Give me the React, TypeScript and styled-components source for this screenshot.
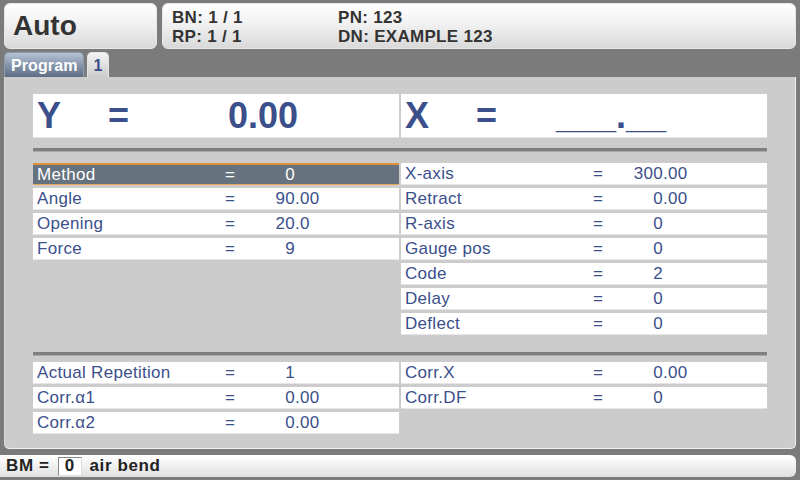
import React from "react";
import styled, { createGlobalStyle } from "styled-components";

const Global = createGlobalStyle`
  html, body { margin: 0; padding: 0; background: #7b7b7b; }
  body { font-family: "Liberation Sans", Arial, sans-serif; }
  * { box-sizing: border-box; }
`;

const Screen = styled.div`
  width: 800px;
  height: 480px;
  background: #7b7b7b;
  padding: 3px 4px 0 4px;
  display: flex;
  flex-direction: column;
  overflow: hidden;
`;

const Header = styled.div`
  display: flex;
  gap: 5px;
  height: 46px;
`;

const HeaderBox = styled.div<{ $w?: number }>`
  ${(p) => (p.$w ? `width: ${p.$w}px; flex: none;` : "flex: 1;")}
  border-radius: 6px;
  background: linear-gradient(#ffffff 0%, #f1f1f1 45%, #d9d9d9 100%);
  border: 1px solid #e8e8e8;
  color: #333;
  font-weight: bold;
`;

const ModeBox = styled(HeaderBox)`
  display: flex;
  align-items: center;
  padding-left: 8px;
  font-size: 28px;
  padding-bottom: 1px;
`;

const InfoBox = styled(HeaderBox)`
  display: grid;
  grid-template-columns: 166px 1fr;
  grid-auto-rows: 19px;
  padding: 4px 0 0 9px;
  font-size: 17px;
  line-height: 19px;
  letter-spacing: 0.3px;
`;

const Tabs = styled.div`
  display: flex;
  gap: 3px;
  height: 25px;
  margin-top: 3px;
  align-items: flex-end;
`;

const Tab = styled.div<{ $active?: boolean }>`
  height: 25px;
  padding: 0 5px 0 6px;
  border-radius: 5px 5px 0 0;
  font-size: 16px;
  font-weight: bold;
  line-height: 26px;
  letter-spacing: 0.1px;
  color: ${(p) => (p.$active ? "#ffffff" : "#3b4f8b")};
  background: ${(p) =>
    p.$active
      ? "linear-gradient(#b4c2d4 0%, #8696ad 50%, #5e6d83 100%)"
      : "linear-gradient(#f4f4f4 0%, #dcdcdc 60%, #cccccc 100%)"};
  border: 1px solid ${(p) => (p.$active ? "#8c9ab0" : "#e6e6e6")};
  border-bottom: none;
`;

const Panel = styled.div`
  height: 372px;
  background: #cccccc;
  border-right: 1px solid #f0f0f0;
  border-bottom: 1px solid #f0f0f0;
  border-left: 1px solid #d8d8d8;
  border-radius: 0 0 5px 5px;
  padding: 17px 28px 0 28px;
  display: flex;
  flex-direction: column;
`;

const Pair = styled.div`
  display: grid;
  grid-template-columns: 366px 366px;
  column-gap: 2px;
  align-items: start;
`;

const Display = styled.div`
  height: 44px;
  background: #ffffff;
  border-bottom: 1px solid #e4e4e4;
  display: grid;
  grid-template-columns: 71px 60px 130px;
  align-items: center;
  padding-left: 4px;
  color: #3b4f8b;
  font-size: 36px;
  font-weight: bold;
  line-height: 44px;
`;

const DisplayValue = styled.span`
  text-align: right;
`;

const Separator = styled.div<{ $top: number; $bottom: number }>`
  margin: ${(p) => p.$top}px 0 ${(p) => p.$bottom}px 0;
  height: 4px;
  width: 734px;
  background: #7f7f7f;
  border-bottom: 1px solid #a9a9a9;
`;

const Column = styled.div`
  display: flex;
  flex-direction: column;
  gap: 3px;
`;

const Row = styled.div<{ $selected?: boolean }>`
  height: 22px;
  display: grid;
  grid-template-columns: 188px 30px 40px 1fr;
  align-items: center;
  padding-left: 4px;
  font-size: 17px;
  letter-spacing: 0.3px;
  line-height: 20px;
  color: ${(p) => (p.$selected ? "#ffffff" : "#3b4f8b")};
  background: ${(p) => (p.$selected ? "#66727e" : "#ffffff")};
  border-top: ${(p) => (p.$selected ? "2px solid #e3923c" : "1px solid #ffffff")};
  border-bottom: 1px solid ${(p) => (p.$selected ? "#eba458" : "#e6e6e6")};
`;

const Eq = styled.span``;

const IntPart = styled.span`
  text-align: right;
`;

const FracPart = styled.span``;

const StatusBar = styled.div`
  margin: 6px 0 0 -4px;
  width: 796px;
  height: 22px;
  border-radius: 0 6px 6px 0;
  background: linear-gradient(#ffffff 0%, #f0f0f0 50%, #e0e0e0 100%);
  display: flex;
  align-items: center;
  padding-left: 6px;
  gap: 8px;
  font-size: 17px;
  font-weight: bold;
  letter-spacing: 0.6px;
  color: #222;
`;

const BMBox = styled.span`
  width: 24px;
  height: 19px;
  background: #fff;
  border: 1px solid #888;
  border-right-color: #ddd;
  border-bottom-color: #ddd;
  display: inline-flex;
  align-items: center;
  justify-content: center;
  line-height: 18px;
  letter-spacing: 0;
`;

type Param = { label: string; value: string; selected?: boolean };

const splitValue = (v: string) => {
  const i = v.indexOf(".");
  return i < 0 ? [v, ""] : [v.slice(0, i), v.slice(i)];
};

const ParamRow = ({ label, value, selected }: Param) => {
  const [int, frac] = splitValue(value);
  return (
    <Row $selected={selected}>
      <span>{label}</span>
      <Eq>=</Eq>
      <IntPart>{int}</IntPart>
      <FracPart>{frac}</FracPart>
    </Row>
  );
};

const leftParams: Param[] = [
  { label: "Method", value: "0", selected: true },
  { label: "Angle", value: "90.00" },
  { label: "Opening", value: "20.0" },
  { label: "Force", value: "9" },
];

const rightParams: Param[] = [
  { label: "X-axis", value: "300.00" },
  { label: "Retract", value: "0.00" },
  { label: "R-axis", value: "0" },
  { label: "Gauge pos", value: "0" },
  { label: "Code", value: "2" },
  { label: "Delay", value: "0" },
  { label: "Deflect", value: "0" },
];

const leftCorr: Param[] = [
  { label: "Actual Repetition", value: "1" },
  { label: "Corr.α1", value: "0.00" },
  { label: "Corr.α2", value: "0.00" },
];

const rightCorr: Param[] = [
  { label: "Corr.X", value: "0.00" },
  { label: "Corr.DF", value: "0" },
];

export default function App() {
  return (
    <>
      <Global />
      <Screen>
        <Header>
          <ModeBox $w={153}>Auto</ModeBox>
          <InfoBox>
            <span>BN: 1 / 1</span>
            <span>PN: 123</span>
            <span>RP: 1 / 1</span>
            <span>DN: EXAMPLE 123</span>
          </InfoBox>
        </Header>
        <Tabs>
          <Tab $active>Program</Tab>
          <Tab>1</Tab>
        </Tabs>
        <Panel>
          <Pair>
            <Display>
              <span>Y</span>
              <span>=</span>
              <DisplayValue>0.00</DisplayValue>
            </Display>
            <Display>
              <span>X</span>
              <span>=</span>
              <DisplayValue>___.__</DisplayValue>
            </Display>
          </Pair>
          <Separator $top={10} $bottom={11} />
          <Pair>
            <Column>
              {leftParams.map((p) => (
                <ParamRow key={p.label} {...p} />
              ))}
            </Column>
            <Column>
              {rightParams.map((p) => (
                <ParamRow key={p.label} {...p} />
              ))}
            </Column>
          </Pair>
          <Separator $top={17} $bottom={6} />
          <Pair>
            <Column>
              {leftCorr.map((p) => (
                <ParamRow key={p.label} {...p} />
              ))}
            </Column>
            <Column>
              {rightCorr.map((p) => (
                <ParamRow key={p.label} {...p} />
              ))}
            </Column>
          </Pair>
        </Panel>
        <StatusBar>
          <span>BM =</span>
          <BMBox>0</BMBox>
          <span>air bend</span>
        </StatusBar>
      </Screen>
    </>
  );
}
